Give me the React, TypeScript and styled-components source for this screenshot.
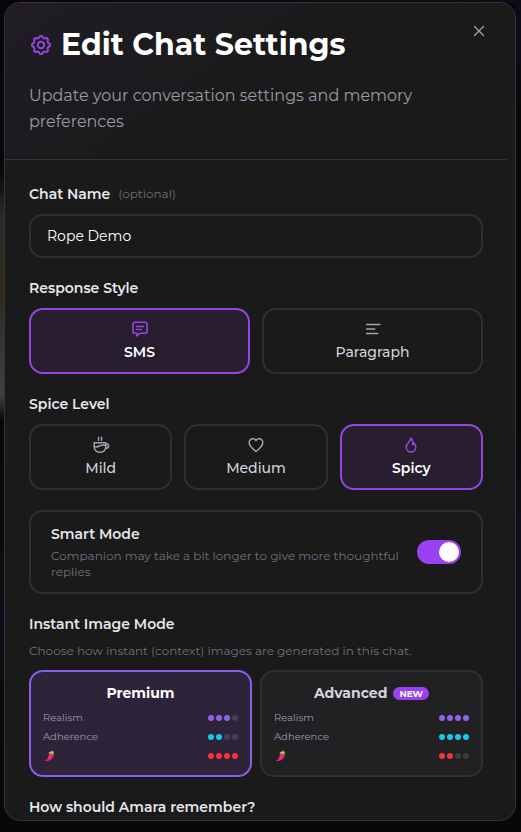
import React, { useState } from "react";
import styled, { createGlobalStyle, css } from "styled-components";

const font = `Montserrat, Inter, "Open Sans", sans-serif`;

const GlobalStyle = createGlobalStyle`
  *, *::before, *::after { box-sizing: border-box; }
  body { margin: 0; background: #070609; }
  button, input { font-family: inherit; }
`;

const Page = styled.div`
  display: flex;
  height: 100vh;
  padding: 2px 5px 11px 4px;
  font-family: ${font};
  color: #e5e7eb;
  background:
    linear-gradient(180deg, transparent 170px, #2e2a24 215px, #302820 290px, #373936 360px, #40423f 395px, transparent 420px) left top / 5px 100% no-repeat,
    linear-gradient(180deg, transparent 55%, #120c18 75%, transparent 90%) left top / 5px 100% no-repeat,
    linear-gradient(180deg, #0f0a18 0, #0f0a18 50px, transparent 110px, transparent 430px, #120e1b 530px, #120e1b 680px, transparent 760px) right top / 6px 100% no-repeat,
    linear-gradient(90deg, #070609, #120b1b) left top / 100% 3px no-repeat,
    #08080a;
`;

const Dialog = styled.section`
  position: relative;
  flex: 1;
  min-width: 0;
  border: 1px solid #353537;
  border-radius: 16px;
  background: #1a1a1a;
  overflow: hidden;
`;

const Scroller = styled.div`
  height: 100%;
  padding-right: 8px;
  overflow-y: auto;
  scrollbar-width: none;
`;

const Header = styled.header`
  padding: 24px;
  border-bottom: 1px solid #323233;
  background: linear-gradient(145deg, #211c26 0%, #1a1a1a 50%);
`;

const TitleRow = styled.div`
  display: flex;
  align-items: center;
  gap: 8px;
  margin-bottom: 20px;
  color: #9147df;
`;

const Title = styled.h1`
  margin: 0;
  font-size: 30px;
  line-height: 36px;
  font-weight: 700;
  color: #fff;
`;

const Subtitle = styled.p`
  margin: 0;
  font-size: 16px;
  line-height: 26px;
  color: #949ca9;
`;

const CloseButton = styled.button`
  position: absolute;
  top: 16px;
  right: 24px;
  display: flex;
  padding: 0;
  border: 0;
  background: none;
  color: #a0a0a2;
  cursor: pointer;
`;

const Body = styled.form`
  display: flex;
  flex-direction: column;
  gap: 20px;
  padding: 24px;
`;

const Section = styled.div`
  display: flex;
  flex-direction: column;
  gap: 10px;
`;

const labelText = css`
  margin: 0;
  font-size: 14px;
  line-height: 20px;
  font-weight: 600;
  color: #e5e7eb;
`;

const FieldLabel = styled.label`
  ${labelText}
  display: flex;
  gap: 8px;
`;

const Heading = styled.h2`
  ${labelText}
`;

const Optional = styled.span`
  font-size: 12px;
  font-weight: 400;
  color: #6b7280;
`;

const Heads = styled.div`
  display: flex;
  flex-direction: column;
  gap: 8px;
`;

const Hint = styled.p<{ $line: number }>`
  margin: 0;
  font-size: 12px;
  line-height: ${(p) => p.$line}px;
  color: #6b7280;
`;

const TextInput = styled.input`
  width: 100%;
  height: 44px;
  padding: 0 16px;
  border: 2px solid #303031;
  border-radius: 14px;
  background: #1a1a1a;
  color: #fff;
  font-size: 14px;
  outline: none;
`;

const Choices = styled.div<{ $columns: number; $gap: number }>`
  display: grid;
  grid-template-columns: repeat(${(p) => p.$columns}, minmax(0, 1fr));
  gap: ${(p) => p.$gap}px;
`;

const Choice = styled.button<{ $on: boolean }>`
  display: flex;
  flex-direction: column;
  align-items: center;
  gap: 4px;
  padding: 10px;
  border: 2px solid ${(p) => (p.$on ? "#9147df" : "#303031")};
  border-radius: 14px;
  background: ${(p) => (p.$on ? "#281e30" : "#1a1a1a")};
  color: ${(p) => (p.$on ? "#fff" : "#d1d5db")};
  font-size: 14px;
  line-height: 20px;
  font-weight: ${(p) => (p.$on ? 600 : 500)};
  cursor: pointer;

  svg { color: ${(p) => (p.$on ? "#9147df" : "#a0a4ae")}; }
`;

const SwitchCard = styled.label`
  display: flex;
  align-items: center;
  justify-content: space-between;
  gap: 16px;
  padding: 12px 20px;
  border: 2px solid #303031;
  border-radius: 14px;
`;

const SwitchText = styled.span`
  display: flex;
  flex-direction: column;
  gap: 4px;
`;

const SwitchTitle = styled.span`
  ${labelText}
`;

const Switch = styled.input`
  appearance: none;
  display: flex;
  flex-shrink: 0;
  width: 44px;
  height: 24px;
  margin: 0;
  padding: 2px;
  border-radius: 12px;
  background: #3a3a3d;

  &::before {
    content: "";
    width: 20px;
    height: 20px;
    border-radius: 50%;
    background: #fff;
  }
  &:checked { justify-content: flex-end; background: #9a41f2; }
`;

const ModeCard = styled.button<{ $on: boolean }>`
  display: flex;
  flex-direction: column;
  gap: 4px;
  padding: 10px 12px;
  border: 2px solid ${(p) => (p.$on ? "#8a5ee6" : "#303032")};
  border-radius: 14px;
  background: ${(p) => (p.$on ? "#2d2439" : "#212123")};
  color: ${(p) => (p.$on ? "#fff" : "#d1d5db")};
  cursor: pointer;
`;

const ModeTitle = styled.span`
  display: flex;
  align-items: center;
  justify-content: center;
  gap: 6px;
  font-size: 14px;
  line-height: 22px;
  font-weight: 700;
`;

const Badge = styled.span`
  padding: 0 6px;
  border-radius: 7px;
  background: #9a41f2;
  color: #fff;
  font-size: 9px;
  line-height: 13px;
  font-weight: 700;
`;

const Ratings = styled.span`
  display: flex;
  flex-direction: column;
`;

const Rating = styled.span`
  display: flex;
  align-items: center;
  justify-content: space-between;
  height: 19px;
  font-size: 10px;
  line-height: 19px;
  font-weight: 400;
  color: #949dad;
`;

const Dots = styled.span`
  display: flex;
  gap: 2px;
`;

const Dot = styled.span<{ $color: string }>`
  width: 6px;
  height: 6px;
  border-radius: 50%;
  background: ${(p) => p.$color};
`;

const Icon = ({ size = 18, width = 1.6, children }: { size?: number; width?: number; children: React.ReactNode }) => (
  <svg width={size} height={size} viewBox={`0 0 ${size} ${size}`} fill="none" stroke="currentColor" strokeWidth={width} strokeLinecap="round" strokeLinejoin="round" aria-hidden="true">
    {children}
  </svg>
);

const gearOutline =
  Array.from({ length: 96 }, (_, i) => {
    const a = (i / 96) * Math.PI * 2;
    const r = 8.2 + 0.9 * Math.tanh(1.6 * Math.cos(8 * a));
    return `${i ? "L" : "M"}${(12 + r * Math.sin(a)).toFixed(2)} ${(12 - r * Math.cos(a)).toFixed(2)}`;
  }).join("") + "Z";

const GearIcon = () => (
  <Icon size={24} width={2}>
    <path d={gearOutline} />
    <circle cx="12" cy="12" r="3.2" />
  </Icon>
);
const CloseIcon = () => (
  <Icon size={24} width={1.3}>
    <path d="M7.5 7.5l9 9M16.5 7.5l-9 9" />
  </Icon>
);
const MessageIcon = () => (
  <Icon>
    <path d="M4 2.3h10a2 2 0 0 1 2 2v6.9a2 2 0 0 1-2 2H9.2l-3.4 2.6v-2.6H4a2 2 0 0 1-2-2V4.3a2 2 0 0 1 2-2z" />
    <path d="M5.5 6.500h7M5.5 9.500h5" />
  </Icon>
);
const LinesIcon = () => (
  <Icon>
    <path d="M2.7 4.500h13M2.7 9h8M2.7 13.500h11" />
  </Icon>
);
const CupIcon = () => (
  <Icon width={1.5}>
    <path d="M2.2 6.700h11.600v4.300a5.200 5.200 0 0 1-5.200 5.200H7.400A5.200 5.200 0 0 1 2.200 11z" />
    <path d="M13.800 8h1.100a1.600 1.600 0 0 1 1.600 1.600v.7a1.900 1.900 0 0 1-1.900 1.900h-.9M2.400 10.600c2.800.9 4-.1 5.600-.9s3.500-.9 5.600-.3" />
    <path d="M6.600 4.300c-.8-1 .7-1.700 0-2.800M9.600 4.300c-.8-1 .7-1.700 0-2.800" />
  </Icon>
);
const HeartIcon = () => (
  <Icon width={1.5}>
    <path d="M9 15.500C5.600 12.900 2.200 9.900 2.200 6.500A3.700 3.700 0 0 1 5.900 2.700C7.200 2.700 8.300 3.400 9 4.500c.7-1.100 1.800-1.800 3.100-1.800a3.700 3.700 0 0 1 3.700 3.800c0 3.400-3.400 6.400-6.800 9z" />
  </Icon>
);
const FlameIcon = () => (
  <Icon>
    <path d="M8.800 2c.3 2.900-4.600 5.100-4.600 9.200a4.800 4.800 0 0 0 9.600 0c0-1.700-.6-3-1.400-4.100-.3.900-.8 1.500-1.700 1.700C11 6 10.500 3.500 8.800 2z" />
  </Icon>
);
const ChiliIcon = () => (
  <svg width="14" height="14" viewBox="0 0 14 14" role="img" aria-label="Spiciness">
    <path d="M6.300 4.200C7.800 3 10.600 3.400 11 5c.4 3.600-3.200 7.300-8.200 7.100-.8-.1-.8-.9-.1-1.200C5.600 10 5.200 6.200 6.300 4.200z" fill="#d92868" />
    <path d="M7.500 5.100C7.200 7.200 7 9 5.600 10.300" stroke="#f3608b" strokeWidth=".7" fill="none" />
    <path d="M5.400 4.300C6 2.600 7.500 2.200 8.600 2.500L9.500 1.500l.9.500-.5.900c.9.400 1.300 1.200 1.300 2.300-1-.5-1.600-.5-2.300 0-.9-.9-2.200-1.100-3.500-.9z" fill="#a5ce4d" />
  </svg>
);

const responseStyles = [
  { name: "SMS", icon: <MessageIcon /> },
  { name: "Paragraph", icon: <LinesIcon /> },
];
const spiceLevels = [
  { name: "Mild", icon: <CupIcon /> },
  { name: "Medium", icon: <HeartIcon /> },
  { name: "Spicy", icon: <FlameIcon /> },
];
const imageModes = [
  { name: "Premium", isNew: false, scores: [3, 2, 4] },
  { name: "Advanced", isNew: true, scores: [4, 4, 2] },
];
const measures = [
  { label: "Realism", color: "#8e62ec" },
  { label: "Adherence", color: "#12cbe8" },
  { label: <ChiliIcon />, color: "#f4333d" },
];

type ChoiceGroupProps = {
  title: string;
  options: { name: string; icon: React.ReactNode }[];
  value: string;
  onChange: (name: string) => void;
};

const ChoiceGroup = ({ title, options, value, onChange }: ChoiceGroupProps) => (
  <Section>
    <Heading>{title}</Heading>
    <Choices $columns={options.length} $gap={12} role="group" aria-label={title}>
      {options.map((o) => (
        <Choice key={o.name} type="button" $on={o.name === value} aria-pressed={o.name === value} onClick={() => onChange(o.name)}>
          {o.icon}
          {o.name}
        </Choice>
      ))}
    </Choices>
  </Section>
);

export default function App() {
  const [name, setName] = useState("Rope Demo");
  const [style, setStyle] = useState("SMS");
  const [spice, setSpice] = useState("Spicy");
  const [smart, setSmart] = useState(true);
  const [mode, setMode] = useState("Premium");

  return (
    <Page>
      <GlobalStyle />
      <Dialog role="dialog" aria-labelledby="dialog-title">
        <Scroller>
          <Header>
            <TitleRow>
              <GearIcon />
              <Title id="dialog-title">Edit Chat Settings</Title>
            </TitleRow>
            <Subtitle>Update your conversation settings and memory preferences</Subtitle>
          </Header>
          <Body>
            <Section>
              <FieldLabel htmlFor="chat-name">
                Chat Name <Optional>(optional)</Optional>
              </FieldLabel>
              <TextInput id="chat-name" type="text" value={name} onChange={(e) => setName(e.target.value)} />
            </Section>
            <ChoiceGroup title="Response Style" options={responseStyles} value={style} onChange={setStyle} />
            <ChoiceGroup title="Spice Level" options={spiceLevels} value={spice} onChange={setSpice} />
            <SwitchCard htmlFor="smart-mode">
              <SwitchText>
                <SwitchTitle>Smart Mode</SwitchTitle>
                <Hint as="span" $line={16}>Companion may take a bit longer to give more thoughtful replies</Hint>
              </SwitchText>
              <Switch id="smart-mode" type="checkbox" role="switch" checked={smart} onChange={(e) => setSmart(e.target.checked)} />
            </SwitchCard>
            <Section>
              <Heads>
                <Heading>Instant Image Mode</Heading>
                <Hint $line={18}>Choose how instant (context) images are generated in this chat.</Hint>
              </Heads>
              <Choices $columns={2} $gap={8} role="group" aria-label="Instant Image Mode">
                {imageModes.map((m) => (
                  <ModeCard key={m.name} type="button" $on={m.name === mode} aria-pressed={m.name === mode} onClick={() => setMode(m.name)}>
                    <ModeTitle>
                      {m.name}
                      {m.isNew && <Badge>NEW</Badge>}
                    </ModeTitle>
                    <Ratings>
                      {measures.map((measure, row) => (
                        <Rating key={row}>
                          {measure.label}
                          <Dots>
                            {[0, 1, 2, 3].map((i) => (
                              <Dot key={i} $color={i < m.scores[row] ? measure.color : "rgba(255, 255, 255, 0.12)"} />
                            ))}
                          </Dots>
                        </Rating>
                      ))}
                    </Ratings>
                  </ModeCard>
                ))}
              </Choices>
            </Section>
            <Heading>How should Amara remember?</Heading>
          </Body>
        </Scroller>
        <CloseButton type="button" aria-label="Close">
          <CloseIcon />
        </CloseButton>
      </Dialog>
    </Page>
  );
}
